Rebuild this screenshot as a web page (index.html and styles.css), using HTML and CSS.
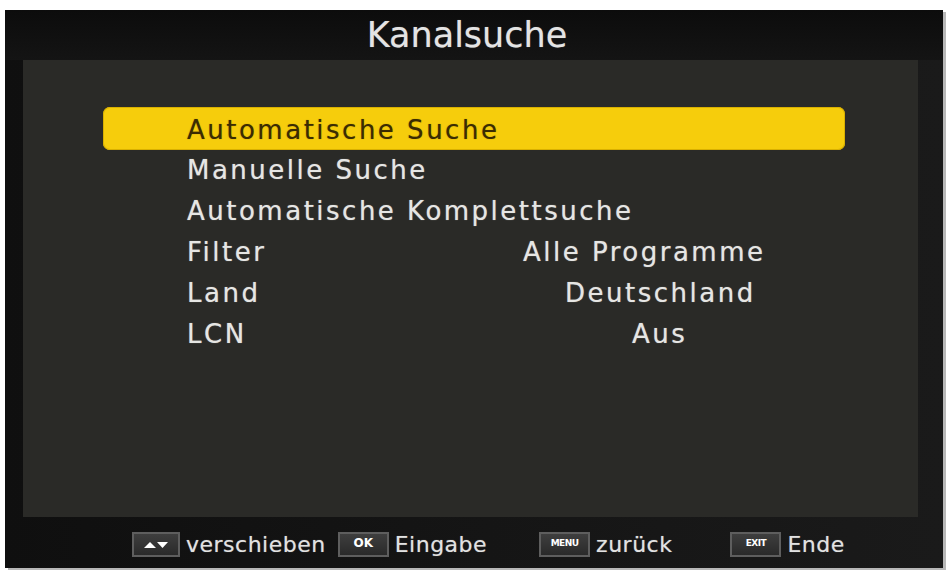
FILE: index.html
```html
<!DOCTYPE html>
<html lang="de">
<head>
<meta charset="utf-8">
<title>Kanalsuche</title>
<link rel="stylesheet" href="styles.css">
</head>
<body>
<div class="screen">
  <header class="title">Kanalsuche</header>
  <main class="panel">
    <ul class="menu">
      <li class="row active"><span class="label">Automatische Suche</span></li>
      <li class="row"><span class="label">Manuelle Suche</span></li>
      <li class="row"><span class="label">Automatische Komplettsuche</span></li>
      <li class="row"><span class="label">Filter</span><span class="value value-filter">Alle Programme</span></li>
      <li class="row"><span class="label">Land</span><span class="value value-land">Deutschland</span></li>
      <li class="row"><span class="label">LCN</span><span class="value value-lcn">Aus</span></li>
    </ul>
  </main>
  <footer class="footer">
    <div class="hint hint-move">
      <span class="key key-arrows">
        <svg width="26" height="10" viewBox="0 0 26 10"><polygon points="1,8 7,2 13,8" fill="#fff"/><polygon points="14,2 25,2 19.5,8" fill="#fff"/></svg>
      </span>
      <span class="hint-text">verschieben</span>
    </div>
    <div class="hint hint-ok">
      <span class="key key-ok">OK</span>
      <span class="hint-text">Eingabe</span>
    </div>
    <div class="hint hint-menu">
      <span class="key key-small">MENU</span>
      <span class="hint-text">zurück</span>
    </div>
    <div class="hint hint-exit">
      <span class="key key-small">EXIT</span>
      <span class="hint-text">Ende</span>
    </div>
  </footer>
</div>
</body>
</html>
```

FILE: styles.css
```css
html, body {
  margin: 0;
  padding: 0;
  background: #ffffff;
}

body {
  width: 948px;
  height: 574px;
  overflow: hidden;
  font-family: "DejaVu Sans", "Liberation Sans", sans-serif;
}

.screen {
  margin: 10px 5px 0 5px;
  width: 938px;
  height: 558px;
  background: linear-gradient(90deg, #0f0f0f 0%, #161616 60%, #1a1a1a 100%);
  display: flex;
  flex-direction: column;
  box-shadow: 3px 2px 0 #b8b8b8;
}

.title {
  height: 50px;
  line-height: 50px;
  text-align: center;
  color: #e4e4e4;
  font-size: 35px;
  padding-right: 14px;
  box-sizing: border-box;
  background: linear-gradient(180deg, #0c0c0c 0%, #141414 100%);
  text-shadow: 0 0 1px rgba(255, 255, 255, 0.4);
}

.panel {
  margin: 0 25px 0 18px;
  height: 457px;
  background: #2a2a27;
  padding-top: 47px;
  box-sizing: border-box;
}

.menu {
  list-style: none;
  margin: 0 0 0 80px;
  padding: 0;
  width: 742px;
}

.row {
  display: grid;
  grid-template-columns: 336px 260px;
  padding-left: 84px;
  height: 41px;
  line-height: 41px;
  font-size: 26px;
  letter-spacing: 2.5px;
  color: #e6e6e4;
  white-space: nowrap;
  text-shadow: 0 0 1px rgba(230, 230, 228, 0.6);
}

.row.active {
  height: 43px;
  line-height: 40px;
  padding-top: 3px;
  box-sizing: border-box;
  background: #f6cd0c;
  border-radius: 7px;
  box-shadow: inset 0 0 0 1px #d9b000;
  color: #3b2c02;
  text-shadow: 0 0 1px rgba(59, 44, 2, 0.5);
}

.label {
  overflow: visible;
}

.value-filter { padding-left: 0; }
.value-land { padding-left: 42px; }
.value-lcn { padding-left: 109px; }

.footer {
  flex: 1;
  display: flex;
  align-items: center;
  padding: 4px 0 0 127px;
  color: #e2e2e2;
  font-size: 22px;
}

.hint {
  display: flex;
  align-items: center;
  gap: 6px;
}

.hint-ok { margin-left: 12px; }
.hint-menu { margin-left: 52px; }
.hint-exit { margin-left: 58px; }

.hint-text {
  letter-spacing: 0.5px;
  line-height: 26px;
  text-shadow: 0 0 1px rgba(226, 226, 226, 0.5);
}

.key {
  display: flex;
  align-items: center;
  justify-content: center;
  height: 25px;
  box-sizing: border-box;
  border: 2px solid #5e5e5e;
  background: linear-gradient(180deg, #3e3e3e 0%, #2a2a2a 100%);
  color: #ffffff;
  font-weight: bold;
}

.key-arrows { width: 48px; }

.key-ok {
  width: 51px;
  font-size: 12px;
  padding-bottom: 4px;
}

.key-small {
  width: 51px;
  font-size: 9px;
  letter-spacing: -0.5px;
  padding-bottom: 3px;
}
```
